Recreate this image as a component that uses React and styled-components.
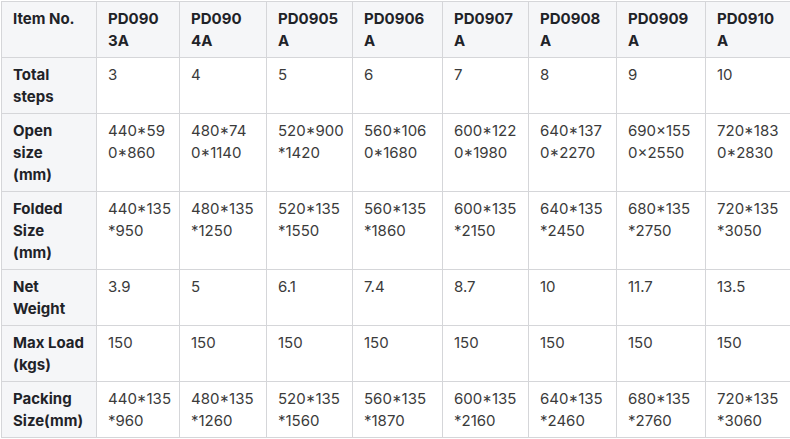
import React from "react";
import styled, { createGlobalStyle } from "styled-components";

const GlobalStyle = createGlobalStyle`
  body {
    margin: 0;
    background: #ffffff;
  }
`;

const Wrap = styled.div`
  padding: 1px 0 0 1px;
  font-family: Inter, "Noto Sans", sans-serif;
`;

const Table = styled.table`
  border-collapse: collapse;
  table-layout: fixed;
  width: 789px;
  font-size: 15px;
  line-height: 22px;
`;

const HeadCell = styled.th`
  background: #f5f6f8;
  border: 1px solid #d5d6d9;
  padding: 6px 8px 5px 11px;
  text-align: left;
  vertical-align: top;
  font-weight: 700;
  color: #1f2328;
  white-space: pre-line;
`;

const Cell = styled.td`
  border: 1px solid #d5d6d9;
  padding: 6px 8px 5px 11px;
  vertical-align: top;
  color: #3b3b3b;
  white-space: pre-line;
`;

const widths = [95, 83, 87, 86, 90, 86, 88, 89, 85];

// line breaks as they fall in the narrow columns
const items = [
  "PD090\n3A",
  "PD090\n4A",
  "PD0905\nA",
  "PD0906\nA",
  "PD0907\nA",
  "PD0908\nA",
  "PD0909\nA",
  "PD0910\nA",
];

const rows = [
  { label: "Total\nsteps", values: ["3", "4", "5", "6", "7", "8", "9", "10"] },
  {
    label: "Open\nsize\n(mm)",
    values: [
      "440*59\n0*860",
      "480*74\n0*1140",
      "520*900\n*1420",
      "560*106\n0*1680",
      "600*122\n0*1980",
      "640*137\n0*2270",
      "690×155\n0×2550",
      "720*183\n0*2830",
    ],
  },
  {
    label: "Folded\nSize\n(mm)",
    values: [
      "440*135\n*950",
      "480*135\n*1250",
      "520*135\n*1550",
      "560*135\n*1860",
      "600*135\n*2150",
      "640*135\n*2450",
      "680*135\n*2750",
      "720*135\n*3050",
    ],
  },
  {
    label: "Net\nWeight",
    values: ["3.9", "5", "6.1", "7.4", "8.7", "10", "11.7", "13.5"],
  },
  {
    label: "Max Load\n(kgs)",
    values: ["150", "150", "150", "150", "150", "150", "150", "150"],
  },
  {
    label: "Packing\nSize(mm)",
    values: [
      "440*135\n*960",
      "480*135\n*1260",
      "520*135\n*1560",
      "560*135\n*1870",
      "600*135\n*2160",
      "640*135\n*2460",
      "680*135\n*2760",
      "720*135\n*3060",
    ],
  },
];

export default function App() {
  return (
    <>
      <GlobalStyle />
      <Wrap>
        <Table>
          <colgroup>
            {widths.map((w, i) => (
              <col key={i} style={{ width: w }} />
            ))}
          </colgroup>
          <thead>
            <tr>
              <HeadCell>Item No.</HeadCell>
              {items.map((it) => (
                <HeadCell key={it}>{it}</HeadCell>
              ))}
            </tr>
          </thead>
          <tbody>
            {rows.map((row) => (
              <tr key={row.label}>
                <HeadCell>{row.label}</HeadCell>
                {row.values.map((v, i) => (
                  <Cell key={i}>{v}</Cell>
                ))}
              </tr>
            ))}
          </tbody>
        </Table>
      </Wrap>
    </>
  );
}
